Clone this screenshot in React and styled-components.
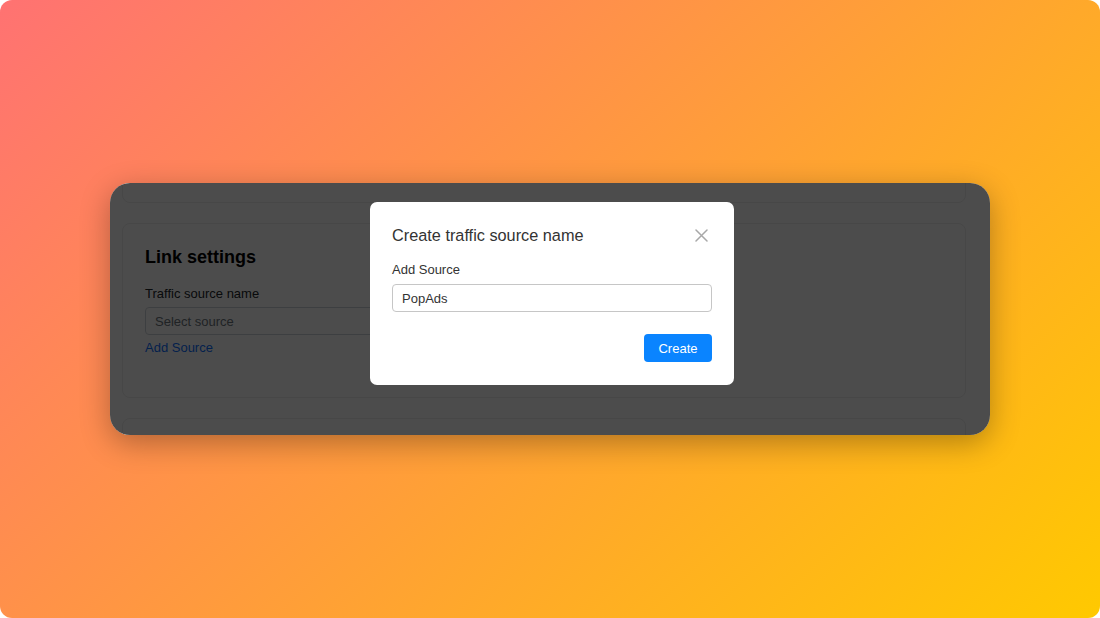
import React, {useState} from "react";
import styled, {createGlobalStyle} from "styled-components";

const GlobalStyle = createGlobalStyle`
  html, body {
    margin: 0;
    padding: 0;
    background: #fff;
  }
  body {
    font-family: "Liberation Sans", Arial, sans-serif;
  }
  * {
    box-sizing: border-box;
  }
`;

function App() {
  const [source, setSource] = useState("PopAds");

  return (
    <Page>
      <GlobalStyle />
      <Window>
        <Content>
          <Card $height={60} />
          <Card $padded>
            <CardTitle>Link settings</CardTitle>
            <FieldLabel>Traffic source name</FieldLabel>
            <SelectBox>Select source</SelectBox>
            <LinkText href="#">Add Source</LinkText>
          </Card>
          <Card $height={60} />
        </Content>

        <Backdrop>
          <Modal>
            <ModalHeader>
              <ModalTitle>Create traffic source name</ModalTitle>
              <CloseButton aria-label="Close">
                <svg width="13" height="13" viewBox="0 0 13 13">
                  <path
                    d="M1 1 L12 12 M12 1 L1 12"
                    stroke="#a8a8a8"
                    strokeWidth="1.5"
                    strokeLinecap="round"
                  />
                </svg>
              </CloseButton>
            </ModalHeader>
            <ModalLabel>Add Source</ModalLabel>
            <TextInput
              value={source}
              onChange={(e) => setSource(e.target.value)}
            />
            <ModalFooter>
              <PrimaryButton>Create</PrimaryButton>
            </ModalFooter>
          </Modal>
        </Backdrop>
      </Window>
    </Page>
  );
}

const Page = styled.div`
  width: 1100px;
  height: 618px;
  border-radius: 12px;
  background: linear-gradient(135deg, #ff7272 0%, #ff9d3a 50%, #ffc900 100%);
  display: flex;
  align-items: center;
  justify-content: center;
  padding-bottom: 1px;
`;

const Window = styled.div`
  position: relative;
  width: 880px;
  height: 252px;
  margin-top: 1px;
  border-radius: 20px;
  overflow: hidden;
  background: #fff;
  box-shadow: 0 8px 30px rgba(0, 0, 0, 0.3);
`;

const Content = styled.div`
  display: flex;
  flex-direction: column;
  gap: 20px;
  margin-top: -40px;
  padding: 0 24px 0 12px;
`;

const Card = styled.div`
  border: 1px solid #ededed;
  border-radius: 8px;
  background: #fff;
  height: ${(p) => (p.$height ? `${p.$height}px` : "auto")};
  min-height: ${(p) => (p.$padded ? "175px" : "0")};
  padding: ${(p) => (p.$padded ? "22px 22px 0" : "0")};
`;

const CardTitle = styled.h2`
  margin: 0 0 18px;
  font-size: 18px;
  line-height: 22px;
  font-weight: 700;
  color: #000;
`;

const FieldLabel = styled.div`
  font-size: 13px;
  line-height: 16px;
  color: #212529;
  margin-bottom: 5px;
`;

const SelectBox = styled.div`
  width: 400px;
  height: 28px;
  border: 1px solid #ced4da;
  border-radius: 4px;
  padding: 0 9px;
  display: flex;
  align-items: center;
  font-size: 13px;
  color: #6c757d;
`;

const LinkText = styled.a`
  display: inline-block;
  margin-top: 5px;
  font-size: 13px;
  line-height: 16px;
  color: #0d6efd;
  text-decoration: none;
`;

const Backdrop = styled.div`
  position: absolute;
  inset: 0;
  background: rgba(0, 0, 0, 0.7);
  display: flex;
  justify-content: center;
  align-items: flex-start;
  padding: 19px 0 0 4px;
`;

const Modal = styled.div`
  width: 364px;
  height: 183px;
  background: #fff;
  border-radius: 7px;
  padding: 23px 22px 0;
  display: flex;
  flex-direction: column;
`;

const ModalHeader = styled.div`
  display: flex;
  align-items: center;
  justify-content: space-between;
  height: 20px;
  margin-bottom: 17px;
`;

const ModalTitle = styled.h3`
  margin: 0;
  font-size: 16.3px;
  font-weight: 400;
  color: #333;
`;

const CloseButton = styled.button`
  border: none;
  background: none;
  padding: 0;
  margin-right: 4px;
  display: flex;
  cursor: pointer;
`;

const ModalLabel = styled.label`
  font-size: 13px;
  line-height: 16px;
  color: #333;
  margin-bottom: 6px;
`;

const TextInput = styled.input`
  width: 320px;
  height: 28px;
  border: 1px solid #c6c6c6;
  border-radius: 4px;
  padding: 0 9px;
  font-family: "Liberation Sans", Arial, sans-serif;
  font-size: 13px;
  color: #333;
  outline: none;
`;

const ModalFooter = styled.div`
  display: flex;
  justify-content: flex-end;
  margin-top: 22px;
`;

const PrimaryButton = styled.button`
  width: 68px;
  height: 28px;
  border: none;
  border-radius: 4px;
  background: #0a84ff;
  color: #fff;
  font-family: "Liberation Sans", Arial, sans-serif;
  font-size: 13px;
  cursor: pointer;
`;

export default App;
